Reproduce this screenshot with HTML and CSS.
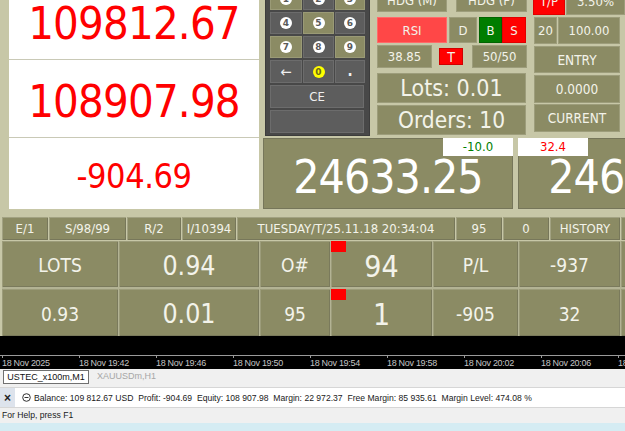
FILE: index.html
```html
<!DOCTYPE html>
<html>
<head>
<meta charset="utf-8">
<link rel="stylesheet" href="styles.css">
</head>
<body>
<div class="screen">
  <div class="top">
    <div class="balances">
      <div class="bal bal-1">109812.67</div>
      <div class="bal bal-2">108907.98</div>
      <div class="bal bal-3">-904.69</div>
    </div>
    <div class="console">
      <div class="controls">
        <div class="keypad">
          <div class="keys">
            <div class="key olive"><span class="num">1</span></div>
            <div class="key"><span class="num">2</span></div>
            <div class="key olive"><span class="num">3</span></div>
            <div class="key"><span class="num">4</span></div>
            <div class="key olive"><span class="num">5</span></div>
            <div class="key"><span class="num">6</span></div>
            <div class="key olive"><span class="num">7</span></div>
            <div class="key"><span class="num">8</span></div>
            <div class="key olive"><span class="num">9</span></div>
            <div class="key arrow">&#8592;</div>
            <div class="key"><span class="num zero">0</span></div>
            <div class="key dot">.</div>
          </div>
          <div class="key wide">CE</div>
          <div class="key wide"></div>
        </div>
        <div class="mid">
          <div class="mrow hdg">
            <div class="btn w70">HDG (M)</div>
            <div class="btn w71">HDG (P)</div>
          </div>
          <div class="mrow sig">
            <div class="btn rsi">RSI</div>
            <div class="btn d">D</div>
            <div class="btn b">B</div>
            <div class="btn s">S</div>
          </div>
          <div class="mrow vals">
            <div class="btn v55">38.85</div>
            <div class="btn t">T</div>
            <div class="btn v55 last">50/50</div>
          </div>
          <div class="btn panel lots">Lots: 0.01</div>
          <div class="btn panel orders">Orders: 10</div>
        </div>
        <div class="rcol">
          <div class="rrow">
            <div class="btn tp">T/P</div>
            <div class="btn pct">3.50%</div>
          </div>
          <div class="rrow r2">
            <div class="btn n20">20</div>
            <div class="btn n100">100.00</div>
          </div>
          <div class="btn rwide entry">ENTRY</div>
          <div class="btn rwide zero4">0.0000</div>
          <div class="btn rwide current">CURRENT</div>
        </div>
      </div>
      <div class="bigs">
        <div class="big"><span class="price">24633.25</span><span class="tag tag-right">-10.0</span></div>
        <div class="big"><span class="price">24665.65</span><span class="tag tag-left">32.4</span></div>
      </div>
    </div>
  </div>

  <div class="strip">
    <div class="cell">E/1</div>
    <div class="cell">S/98/99</div>
    <div class="cell">R/2</div>
    <div class="cell">I/10394</div>
    <div class="cell">TUESDAY/T/25.11.18 20:34:04</div>
    <div class="cell">95</div>
    <div class="cell">0</div>
    <div class="cell">HISTORY</div>
    <div class="cell"></div>
  </div>

  <div class="grid">
    <div class="gc">LOTS</div>
    <div class="gc mid-num">0.94</div>
    <div class="gc">O#</div>
    <div class="gc big-num">94<span class="flag"></span></div>
    <div class="gc">P/L</div>
    <div class="gc">-937</div>
    <div class="gc"></div>
    <div class="gc">0.93</div>
    <div class="gc mid-num">0.01</div>
    <div class="gc">95</div>
    <div class="gc big-num">1<span class="flag"></span></div>
    <div class="gc">-905</div>
    <div class="gc">32</div>
    <div class="gc"></div>
  </div>

  <div class="chart">
    <div class="axis">
      <span class="tick">18 Nov 2025</span>
      <span class="tick">18 Nov 19:42</span>
      <span class="tick">18 Nov 19:46</span>
      <span class="tick">18 Nov 19:50</span>
      <span class="tick">18 Nov 19:54</span>
      <span class="tick">18 Nov 19:58</span>
      <span class="tick">18 Nov 20:02</span>
      <span class="tick">18 Nov 20:06</span>
      <span class="tick">18 Nov 20:10</span>
    </div>
  </div>

  <div class="tabs">
    <div class="tab active">USTEC_x100m,M1</div>
    <div class="tab">XAUUSDm,H1</div>
  </div>

  <div class="toolbox">
    <div class="close">&#215;</div>
    <svg class="minus" width="9" height="9" viewBox="0 0 9 9"><circle cx="4.5" cy="4.5" r="3.8" fill="none" stroke="#333" stroke-width="1"/><line x1="2.5" y1="4.5" x2="6.5" y2="4.5" stroke="#333" stroke-width="1"/></svg>
    <div class="summary">Balance: 109 812.67 USD&nbsp; Profit: -904.69&nbsp; Equity: 108 907.98&nbsp; Margin: 22 972.37&nbsp; Free Margin: 85 935.61&nbsp; Margin Level: 474.08 %</div>
  </div>

  <div class="statusbar">For Help, press F1</div>
  <div class="taskbar"></div>
</div>
</body>
</html>
```
FILE: styles.css
```css
* { box-sizing: border-box; }
html, body { margin: 0; padding: 0; }
body {
  width: 625px;
  height: 431px;
  overflow: hidden;
  background: #c7c7a7;
  font-family: "DejaVu Sans Condensed", "DejaVu Sans", sans-serif;
  color: #f3f3ea;
}
.screen {
  width: 625px;
  height: 431px;
  overflow: hidden;
  display: flex;
  flex-direction: column;
}

/* ---------- top area ---------- */
.top { display: flex; height: 209px; flex: none; }
.balances {
  margin-left: 9px;
  width: 250px;
  flex: none;
  background: #ffffff;
  color: #ff0000;
  display: flex;
  flex-direction: column;
  text-align: center;
  letter-spacing: -0.8px;
}
.bal { border-bottom: 1px solid #c9c9b6; }
.bal-1 { height: 60px; padding-top: 1px; font-size: 45px; line-height: 45px; }
.bal-2 { height: 78px; padding-top: 19px; font-size: 45px; line-height: 45px; }
.bal-3 { flex: 1; border-bottom: 0; padding-top: 21px; font-size: 34px; line-height: 34px; letter-spacing: -0.4px; }

.console { margin-left: 4px; width: 362px; flex: none; display: flex; flex-direction: column; }
.controls { height: 136px; flex: none; display: flex; align-items: flex-end; }

/* keypad */
.keypad {
  margin-left: 2px;
  width: 105px;
  height: 150px;
  flex: none;
  background: #484848;
  border: 1px solid #3c3c3c;
  padding: 1px 5px 2px 4px;
  display: flex;
  flex-direction: column;
  gap: 2px;
}
.keys {
  display: grid;
  grid-template-columns: 32px 31px 30px;
  grid-template-rows: 22px 22px 22px 23px;
  column-gap: 1px;
  row-gap: 2px;
}
.key {
  display: flex;
  align-items: center;
  justify-content: center;
  background: #5d5d5d;
  border: 1px solid #6c6c6c;
  color: #f0f0f0;
  font-size: 13px;
}
.key.olive { background: #8b8b64; border-color: #9a9a76; }
.key.wide { height: 23px; }
.key.arrow { font-size: 15px; }
.key.dot { font-size: 15px; font-weight: bold; align-items: flex-end; padding-bottom: 2px; }
.num {
  width: 12px;
  height: 12px;
  border-radius: 50%;
  background: #ffffff;
  color: #5a5a5a;
  font-family: "DejaVu Sans", sans-serif;
  font-weight: bold;
  font-size: 9px;
  line-height: 12px;
  text-align: center;
}
.num.zero { background: #ffff00; color: #6a6a1a; }

/* generic olive button */
.btn {
  display: flex;
  align-items: center;
  justify-content: center;
  background: #8b8b64;
  border: 1px solid #9d9d7b;
  color: #f3f3ea;
  white-space: nowrap;
  overflow: hidden;
}

/* middle controls */
.mid {
  margin-left: 7px;
  width: 150px;
  flex: none;
  display: flex;
  flex-direction: column;
  font-size: 13px;
}
.mrow { display: flex; align-items: center; flex: none; }
.mrow .btn { height: 100%; }
.hdg { height: 24px; }
.hdg .w70 { width: 70px; }
.hdg .w71 { width: 71px; margin-left: 9px; }
.sig { height: 26px; margin-top: 5px; }
.sig .rsi { width: 70px; background: #ff4747; border-color: #ff6a6a; }
.sig .d { width: 28px; margin-left: 2px; }
.sig .b { width: 23px; margin-left: 2px; background: #007d00; border-color: #006400; }
.sig .s { width: 24px; background: #ff0000; border-color: #e00000; }
.vals { height: 23px; margin-top: 2px; }
.vals .v55 { width: 55px; }
.vals .t { width: 24px; height: 17px; margin-left: 7px; background: #ff0000; border-color: #d00000; font-size: 14px; }
.vals .last { margin-left: 9px; }
.panel { width: 149px; flex: none; height: 30px; font-size: 23px; }
.lots { margin-top: 5px; }
.orders { margin-top: 2px; margin-bottom: 1px; font-size: 22.5px; }

/* right column */
.rcol {
  margin-left: 6px;
  width: 92px;
  flex: none;
  display: flex;
  flex-direction: column;
  font-size: 13px;
  padding-bottom: 4px;
}
.rrow { display: flex; height: 27px; flex: none; }
.rrow .btn { height: 100%; }
.tp { width: 32px; background: #ff0000; border-color: #e00000; }
.pct { width: 59px; margin-left: 1px; }
.r2 { margin-top: 2px; padding-left: 1px; }
.n20 { width: 23px; }
.n100 { width: 62px; margin-left: 1px; }
.rwide { width: 86px; margin-left: 1px; flex: none; font-size: 13.5px; }
.entry { height: 27px; margin-top: 2px; }
.zero4 { height: 28px; margin-top: 2px; }
.current { height: 28px; margin-top: 1px; }

/* big prices */
.bigs { margin-top: 2px; height: 71px; flex: none; display: flex; gap: 5px; }
.big {
  position: relative;
  width: 250px;
  flex: none;
  background: #8b8b64;
  border: 1px solid #76765a;
  display: flex;
  align-items: center;
  justify-content: center;
  padding-top: 6px;
  color: #ffffff;
}
.price {
  font-size: 46px;
  line-height: 36px;
  letter-spacing: -1px;
}
.tag {
  position: absolute;
  top: -1px;
  width: 70px;
  height: 18px;
  background: #ffffff;
  font-size: 13px;
  line-height: 18px;
  text-align: center;
}
.tag-right { right: -1px; color: #008000; }
.tag-left { left: -1px; color: #ff0000; }

/* ---------- status strip ---------- */
.strip {
  margin-top: 8px;
  margin-left: 2px;
  height: 23px;
  flex: none;
  display: grid;
  grid-template-columns: 46px 77px 54px 54px 218px 46px 46px 70px 60px;
  column-gap: 1px;
  font-size: 13px;
}
.cell {
  display: flex;
  align-items: center;
  justify-content: center;
  background: #8b8b64;
  box-shadow: inset 1px 1px 0 #a2a282, inset -1px -1px 0 #77775a;
  white-space: nowrap;
}

/* ---------- main grid ---------- */
.grid {
  margin-top: 1px;
  margin-left: 2px;
  height: 95px;
  flex: none;
  display: grid;
  grid-template-columns: 116px 140px 70px 101px 85px 101px 60px;
  grid-template-rows: 46px 47px;
  column-gap: 1px;
  row-gap: 2px;
  background: #b3b394;
  font-size: 19px;
}
.gc {
  position: relative;
  display: flex;
  align-items: center;
  justify-content: center;
  background: #8b8b64;
  box-shadow: inset 1px 1px 0 #9c9c7a, inset -1px -1px 0 #7a7a5c;
  padding-top: 2px;
}
.gc.mid-num { font-size: 26.5px; }
.gc.big-num { font-size: 30px; padding-top: 4px; }
.flag {
  position: absolute;
  left: 0;
  top: 0;
  width: 15px;
  height: 11px;
  background: #ff0000;
}

/* ---------- chart ---------- */
.chart { height: 33px; flex: none; background: #000000; padding-top: 19px; }
.axis {
  display: flex;
  border-top: 1px solid #9a9a9a;
  padding-left: 2px;
  height: 14px;
}
.tick {
  position: relative;
  width: 77px;
  flex: none;
  padding-top: 2px;
  font-family: "Liberation Sans", sans-serif;
  font-size: 9px;
  letter-spacing: -0.3px;
  color: #c4c4c4;
  white-space: nowrap;
}
.tick::before {
  content: "";
  position: absolute;
  left: 0;
  top: 0;
  width: 1px;
  height: 2px;
  background: #9a9a9a;
}

/* ---------- terminal bottom ---------- */
.tabs {
  height: 18px;
  flex: none;
  background: #f0f0f0;
  display: flex;
  align-items: flex-start;
  padding: 1px 0 0 3px;
  font-family: "Liberation Sans", sans-serif;
  font-size: 9px;
}
.tab { height: 14px; line-height: 12px; color: #a6a6a6; padding: 0 0 0 8px; }
.tab.active {
  width: 86px;
  padding: 0;
  background: #ffffff;
  border: 1px solid #707070;
  color: #111111;
  text-align: center;
}
.toolbox {
  height: 21px;
  flex: none;
  background: #ffffff;
  border-top: 1px solid #d6d6d6;
  border-bottom: 1px solid #d6d6d6;
  display: flex;
  align-items: center;
  font-family: "Liberation Sans", sans-serif;
  font-size: 8.6px;
  color: #1a1a1a;
}
.close {
  width: 15px;
  height: 100%;
  background: #dde3ec;
  display: flex;
  align-items: center;
  justify-content: center;
  font-size: 12px;
  font-weight: bold;
  color: #222;
}
.minus { margin-left: 7px; flex: none; }
.summary { margin-left: 3px; white-space: nowrap; }
.statusbar {
  height: 15px;
  flex: none;
  background: #f0f0f0;
  padding: 2px 0 0 2px;
  font-family: "Liberation Sans", sans-serif;
  font-size: 8.6px;
  color: #1a1a1a;
}
.taskbar { flex: 1; background: #d5ecf3; }
```
